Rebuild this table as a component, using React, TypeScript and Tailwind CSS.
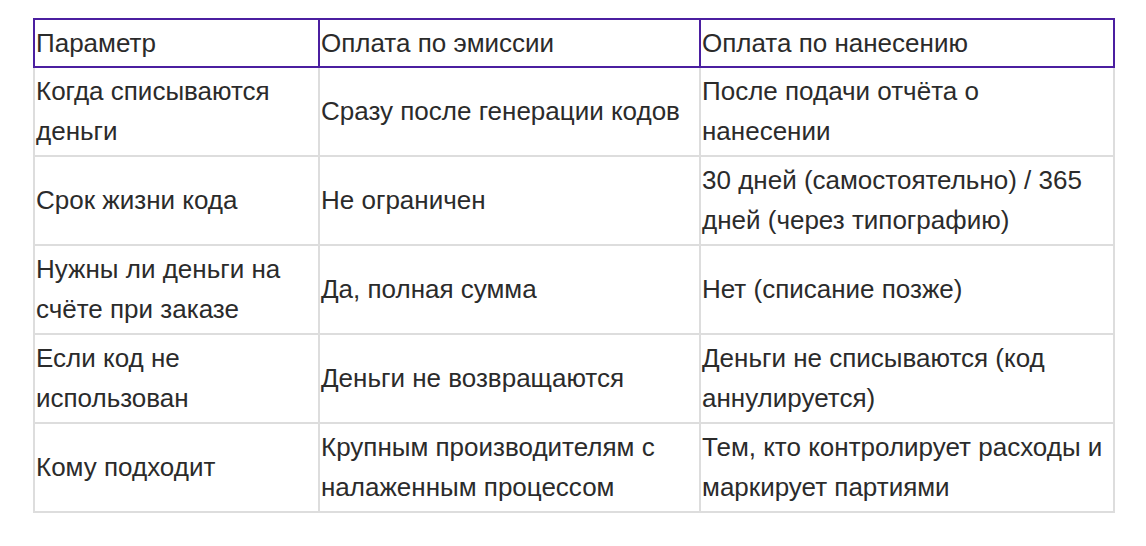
const rows = [
  ["Когда списываются деньги", "Сразу после генерации кодов", "После подачи отчёта о нанесении"],
  ["Срок жизни кода", "Не ограничен", "30 дней (самостоятельно) / 365 дней (через типографию)"],
  ["Нужны ли деньги на счёте при заказе", "Да, полная сумма", "Нет (списание позже)"],
  ["Если код не использован", "Деньги не возвращаются", "Деньги не списываются (код аннулируется)"],
  ["Кому подходит", "Крупным производителям с налаженным процессом", "Тем, кто контролирует расходы и маркирует партиями"],
]

const App = () => {
  return (
    <div className="bg-white min-h-[546px] pt-[18px] pl-[33px] font-['Liberation_Sans',Arial,sans-serif] text-[#2b2b2b] text-[26px] leading-[40px]">
      <table className="border-collapse table-fixed w-[1080px]">
        <colgroup>
          <col className="w-[285px]" />
          <col className="w-[381px]" />
          <col className="w-[414px]" />
        </colgroup>
        <thead>
          <tr>
            {["Параметр", "Оплата по эмиссии", "Оплата по нанесению"].map((h) => (
              <th key={h} className="border-2 border-[#4b1fa0] pl-[1px] pr-[2px] py-[3px] text-left font-normal align-middle">
                {h}
              </th>
            ))}
          </tr>
        </thead>
        <tbody>
          {rows.map((row, i) => (
            <tr key={i}>
              {row.map((cell, j) => (
                <td key={j} className="border-2 border-[#dddddd] pl-[1px] pr-[2px] pt-[3px] pb-[4px] align-middle">
                  {cell}
                </td>
              ))}
            </tr>
          ))}
        </tbody>
      </table>
    </div>
  )
}

export default App
